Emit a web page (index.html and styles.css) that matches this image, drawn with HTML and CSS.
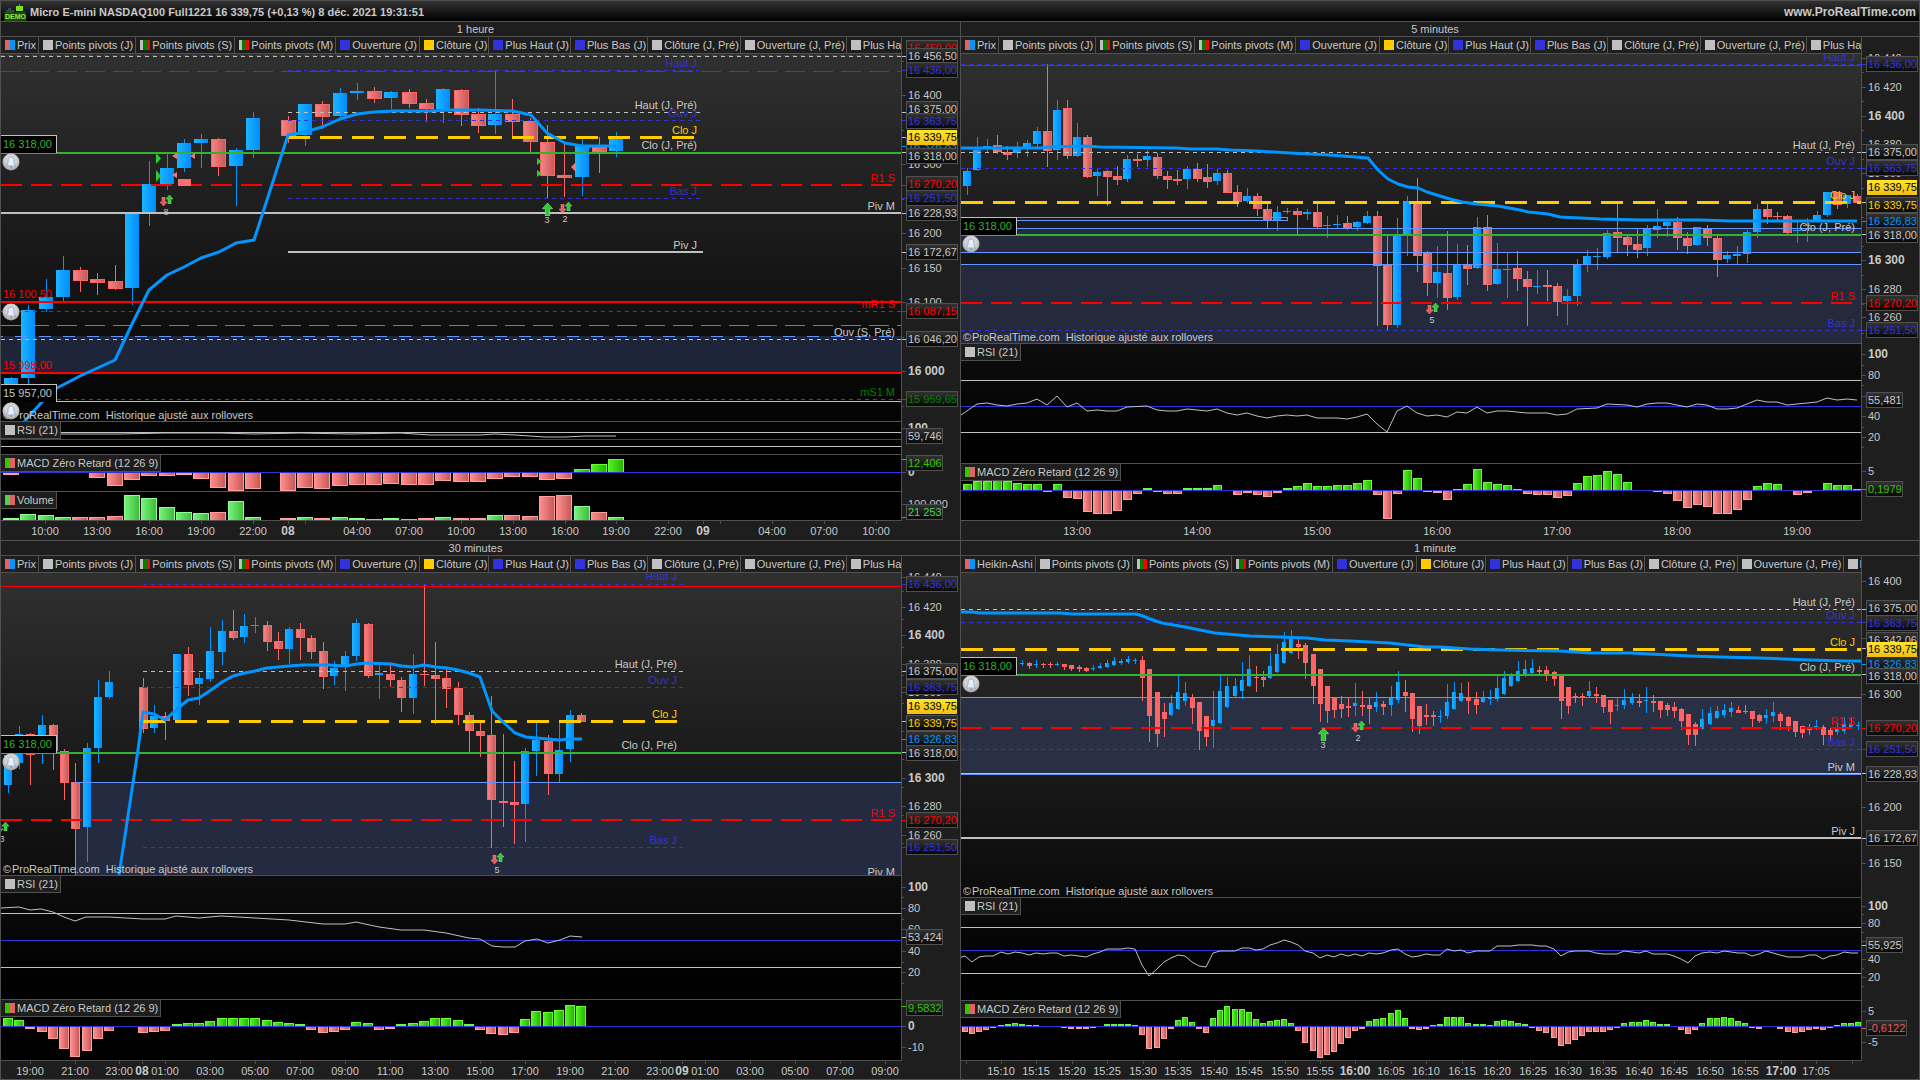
FILE: index.html
```html
<!DOCTYPE html>
<html lang="fr">
<head>
<meta charset="utf-8">
<title>Micro E-mini NASDAQ100 Full1221</title>
<link rel="stylesheet" href="styles.css">
</head>
<body>
<header class="topbar">
  <svg class="topbar__logo" width="24" height="18" viewBox="0 0 24 18" aria-hidden="true">
    <path d="M6 5v4M5 6h3M3 8h8" stroke="#3a4654" stroke-width="2"/>
    <path d="M16.500 1v2" stroke="#5c9c28" stroke-width="1"/>
    <rect x="13" y="3" width="7" height="5" fill="#7be026"/>
    <rect x="1" y="9" width="22" height="9" fill="#22401a"/>
    <text class="topbar__demo" x="2" y="16">DEMO</text>
  </svg>
  <h1 class="topbar__title">Micro E-mini NASDAQ100 Full1221 16 339,75 (+0,13 %) 8 déc. 2021 19:31:51</h1>
  <a class="topbar__link" href="#">www.ProRealTime.com</a>
</header>
<main class="charts">
  <section class="chart" data-chart="h1"><h2 class="chart__title">1 heure</h2></section>
  <section class="chart" data-chart="m5"><h2 class="chart__title">5 minutes</h2></section>
  <section class="chart" data-chart="m30"><h2 class="chart__title">30 minutes</h2></section>
  <section class="chart" data-chart="m1"><h2 class="chart__title">1 minute</h2></section>
</main>
<svg class="defs" width="0" height="0" aria-hidden="true">
  <defs>
    <linearGradient id="gUp"><stop offset="0" stop-color="#1eb4ff"/><stop offset="1" stop-color="#008cff"/></linearGradient>
    <linearGradient id="gDown"><stop offset="0" stop-color="#fa8282"/><stop offset="1" stop-color="#c85a5a"/></linearGradient>
    <linearGradient id="gPos"><stop offset="0" stop-color="#50f028"/><stop offset="1" stop-color="#28b400"/></linearGradient>
    <linearGradient id="gNeg"><stop offset="0" stop-color="#ff8c8c"/><stop offset="1" stop-color="#c85a5a"/></linearGradient>
    <linearGradient id="gVol"><stop offset="0" stop-color="#78f078"/><stop offset="1" stop-color="#3cbe3c"/></linearGradient>
    <linearGradient id="gTag" x2="0" y2="1"><stop offset="0" stop-color="#323232"/><stop offset="1" stop-color="#080808"/></linearGradient>
    <linearGradient id="gLast" x2="0" y2="1"><stop offset="0" stop-color="#ffe628"/><stop offset="1" stop-color="#f0be14"/></linearGradient>
    <radialGradient id="gBell" cx=".5" cy=".4" r=".6"><stop offset="0" stop-color="#f0f0f0"/><stop offset=".7" stop-color="#c8c8c8"/><stop offset="1" stop-color="#969696"/></radialGradient>
    <symbol id="bell" viewBox="0 0 18 18">
      <circle cx="9" cy="9" r="8.500" fill="url(#gBell)"/>
      <path d="M9 4c-2.500 0-3 1.500-3 4 0 2.500-.5 3.500-2 5h10c-1.500-1.500-2-2.500-2-5 0-2.500-.5-4-3-4z" fill="#e6eefa" stroke="#9aacc8" stroke-width="1"/>
      <path d="M8 13.500h2v1.500h-2z" fill="#8a9ab4"/>
    </symbol>
    <symbol id="up" viewBox="0 0 7 9"><path d="M3.500 0L7 4H5v5H2V4H0z" fill="#32c832" stroke="#78f078" stroke-width=".5"/></symbol>
    <symbol id="down" viewBox="0 0 7 9"><path d="M3.500 9L0 5h2V0h3v5h2z" fill="#e65a5a" stroke="#ff8c8c" stroke-width=".5"/></symbol>
  </defs>
</svg>
<script src="charts.js"></script>
</body>
</html>
```
FILE: styles.css
```css
* { box-sizing: border-box; }

body {
  margin: 0;
  min-height: 100vh;
  display: flex;
  flex-direction: column;
  background: #1e1e1e;
  color: #c8c8c8;
  font: 11px/14px "Liberation Sans", Arial, sans-serif;
}

svg { display: block; }
.defs { position: absolute; }

.topbar {
  display: flex;
  align-items: center;
  gap: 3px;
  height: 22px;
  padding: 2px 3px 0 2px;
  border: 1px solid #505050;
  background: linear-gradient(#323232, #000);
}
.topbar__demo { font: bold 7px "Liberation Sans", Arial, sans-serif; fill: #8cf03c; }
.topbar__title { margin: 0; flex: 1; font-size: 11px; line-height: 16px; white-space: nowrap; }
.topbar__link { color: inherit; font-size: 12px; line-height: 16px; font-weight: bold; text-decoration: none; }

.charts { display: grid; grid-template-columns: 1fr 1fr; grid-template-rows: auto auto; }

.chart {
  display: grid;
  grid-template-columns: minmax(0, 1fr) 58px;
  grid-template-rows: 15px auto;
  min-width: 0;
  border-left: 1px solid #505050;
  border-bottom: 1px solid #505050;
}
.chart:nth-child(even) { grid-template-columns: minmax(0, 1fr) 57px; border-right: 1px solid #505050; }

.chart__title {
  grid-column: 1 / -1;
  margin: 0;
  padding-right: 10px;
  border-bottom: 1px solid #505050;
  font-size: 11px;
  font-weight: normal;
  line-height: 14px;
  text-align: center;
}
.chart__plots { border-right: 1px solid #505050; background: linear-gradient(#303030, #000 85%); }
.chart__main { min-width: 0; }

.legend {
  display: flex;
  margin: 0;
  padding: 0;
  height: 17px;
  overflow: hidden;
  list-style: none;
  background: #1e1e1e;
  border-bottom: 1px solid #505050;
  border-right: 1px solid #505050;
}
.legend__item {
  display: flex;
  flex: none;
  align-items: center;
  gap: 2px;
  padding: 0 2px 0 4px;
  border-right: 1px solid #505050;
  line-height: 16px;
  white-space: nowrap;
}
.legend__item:nth-child(n+6) { padding-right: 1px; }

.swatch { width: 10px; height: 10px; flex: none; background: #c0c0c0; }
.swatch--price { background: linear-gradient(90deg, #e06464 50%, #0096ff 50%); }
.swatch--pivot { background: linear-gradient(90deg, #c0c0c0 30%, #008000 30% 70%, #f00 70%); }
.swatch--blue { background: #3232dc; }
.swatch--yellow { background: #fc0; }
.swatch--macd { background: linear-gradient(90deg, #32c800 50%, #e06464 50%); }
.swatch--volume { background: linear-gradient(90deg, #50d250 50%, #e06464 50%); }

.pane { display: grid; border-bottom: 1px solid #505050; }
.pane__svg { grid-area: 1 / 1; width: 100%; }
.pane__label {
  grid-area: 1 / 1;
  place-self: start;
  z-index: 1;
  display: flex;
  align-items: center;
  gap: 2px;
  height: 17px;
  padding: 0 2px 0 4px;
  background: #1e1e1e;
  border-right: 1px solid #505050;
  border-bottom: 1px solid #505050;
}
.timeline, .scale { width: 100%; }

text { font-size: 11px; fill: #c8c8c8; white-space: pre; }
.t-bold { font-size: 12px; font-weight: bold; }
.t-small { font-size: 9px; }
.crisp { shape-rendering: crispEdges; }
```
FILE: charts.js
```js
const WHITE = '#c0c0c0', BLUE = '#3232dc', YELLOW = '#ffcc00', RED = '#ff0000',
      GREEN = '#32b432', DGREEN = '#008000', SKY = '#0096ff', ZONE = '#6496ff', FRAME = '#505050';
const SHORT = '4 4', LONG = '20 8', THICK = '21 9', CLOSE = '22 10';
const FAR = 4000;

const rect = (x, y, w, h, fill, extra = '') =>
  `<rect x="${x}" y="${y}" width="${w}" height="${h}" fill="${fill}" ${extra}/>`;
const text = (x, y, s, { fill = '', anchor = 'start', cls = '' } = {}) =>
  `<text x="${x}" y="${y}" text-anchor="${anchor}" class="${cls}" ${fill ? `style="fill:${fill}"` : ''}>${s}</text>`;
const path = (pts, color, w) =>
  `<polyline points="${pts.join(' ')}" fill="none" stroke="${color}" stroke-width="${w}" stroke-linejoin="round"/>`;

// Horizontal level: top row, start, end, colour, thickness, dash, dash offset
const level = ([y, x1, x2, color, w = 1, dash = '', off = 0]) =>
  `<line class="crisp" x1="${x1}" x2="${x2}" y1="${y + w / 2}" y2="${y + w / 2}" stroke="${color}" stroke-width="${w}" stroke-dasharray="${dash}" stroke-dashoffset="${off}"/>`;

// Candles: "u high top bottom low" (u = up, d = down, - = no bar)
function candles(list, xAt, width) {
  return list.split(',').map((item, k) => {
    const [kind, h, t, b, l] = item.trim().split(' ').map((v, i) => (i ? +v : v));
    if (kind === '-') return '';
    const x = xAt(k), half = Math.floor(width / 2);
    const wick = rect(x, h, 1, Math.max(l - h, 1), kind === 'u' ? SKY : '#ff6464');
    if (kind === 'u') return wick + rect(x - half, t, width, Math.max(b - t, 1), 'url(#gUp)');
    const tall = b - t > 2 && width > 5;
    return wick + rect(x - half, t, width + 1, Math.max(b - t, 1), '#ff6464') +
      (tall ? rect(x - half + 1, t + 1, width - 1, b - t - 2, 'url(#gDown)') : '');
  }).join('');
}

// Histogram: signed bar heights around a zero row
function bars(values, xAt, width, zero) {
  return values.map((v, k) => {
    if (!v) return '';
    const x = xAt(k) - Math.floor(width / 2), h = Math.abs(v), y = v > 0 ? zero - h : zero + 1;
    const edge = v > 0 ? '#64ff32' : '#ffa0a0';
    return rect(x, y, width, h, edge) +
      (h > 2 ? rect(x + 1, v > 0 ? y + 1 : y, width - 2, h - 1, v > 0 ? 'url(#gPos)' : 'url(#gNeg)') : '');
  }).join('');
}
const volume = (list, xAt, width, base) => list.split(' ').map((item, k) => {
  if (item === '-') return '';
  const up = item[0] === 'u', h = +item.slice(1), x = xAt(k) - width / 2;
  return rect(x, base - h, width, h, up ? '#8cff8c' : '#ffa0a0') +
    (h > 2 ? rect(x + 1, base - h + 1, width - 2, h - 1, up ? 'url(#gVol)' : 'url(#gNeg)') : '');
}).join('');

const alertTag = (x, y, label, color) =>
  rect(x, y, 56, 18, WHITE) + rect(x, y + 1, 55, 17, '#000') + text(x + 2, y + 13, label, { fill: color });
const bell = (x, y) => `<use href="#bell" x="${x - 9}" y="${y - 9}" width="18" height="18"/>`;
const pair = (x, y, n) =>
  `<use href="#down" x="${x - 6}" y="${y + 2}" width="7" height="9"/><use href="#up" x="${x}" y="${y}" width="7" height="9"/>` +
  text(x, y + 20, n, { anchor: 'middle', cls: 't-small' });
const single = (x, y, n) =>
  `<use href="#up" x="${x - 5}" y="${y}" width="11" height="13"/>` + text(x, y + 20, n, { anchor: 'middle', cls: 't-small' });
const triR = (x, y, h = 7) => `<path d="M${x} ${y}l5 ${h / 2}l-5 ${h / 2}z" fill="#32c832"/>`;
const triL = (x, y, h = 6) => `<path d="M${x} ${y}l-5 ${h / 2}l5 ${h / 2}z" fill="#f07878"/>`;
const note = (x, y) => text(x, y, '©') + text(x + 9, y, 'ProRealTime.com  Historique ajusté aux rollovers');
const names = (x, list) => list.map(([y, s, fill]) => text(x, y, s, { fill, anchor: 'end' })).join('');

// Price scale entries: [y, text, colour, kind]
const scaleItem = x => ([y, s, color = '', kind = 'tag']) => {
  if (kind === 'plain') return rect(x - 4, y, 4, 1, FRAME) + text(x + 2, y + 4, s);
  if (kind === 'bold') return rect(x - 4, y, 4, 1, FRAME) + text(x + 2, y + 4, s, { cls: 't-bold' });
  if (kind === 'last') return rect(x + 1, y - 7, 50, 15, 'url(#gLast)') + text(x + 2, y + 4, s, { fill: '#000' });
  const w = s.length > 8 ? 52 : s.length > 6 ? 41 : 37;
  return rect(x, y - 8, w, 16, FRAME) + rect(x + 1, y - 7, w - 2, 14, 'url(#gTag)') +
    text(x + 2, y + 4, s, { fill: color });
};
const ticks = (x, list) => list.map(([y, color, w = 4]) => rect(x - 4, y, w, 1, color)).join('');
const minor = (x, from, to, step) => {
  let out = '';
  for (let y = from; y < to; y += step) out += rect(x - 4, Math.round(y), 2, 1, FRAME);
  return out;
};
const times = (y, list) => list.map(([x, s, bold]) =>
  rect(x, y, 1, 3, FRAME) + text(x, y + 14, s, { anchor: 'middle', cls: bold ? 't-bold' : '' })).join('');

const LEGEND = [['pivot0', 'Points pivots (J)'], ['pivot', 'Points pivots (S)'], ['pivot', 'Points pivots (M)'],
  ['blue', 'Ouverture (J)'], ['yellow', 'Clôture (J)'], ['blue', 'Plus Haut (J)'], ['blue', 'Plus Bas (J)'],
  ['gray', 'Clôture (J, Pré)'], ['gray', 'Ouverture (J, Pré)'], ['gray', 'Plus Haut (J, Pré)']];

const x1 = k => Math.round(11 + 17.29 * k);
const x2 = k => 967 + 10 * k;
const x3 = k => Math.round(8 + 11.24 * k);
const x4 = k => Math.floor(965.6 + 7.09 * k);

const CHARTS = {
  h1: {
    x: 1, top: 54, first: 'Prix',
    panes: [
      { h: 367, draw:
        rect(1, 336, FAR, 37, '#1e2538') +
        candles('u 377 378 384 404,u 305 310 378 384,u 279 297 309 312,u 256 270 297 301,d 267 270 281 292,d 273 279 283 295,d 265 281 289 290,u 213 213 288 305,u 161 184 212 226,u 154 168 184 190,u 139 143 168 172,u 134 139 143 168,d 138 139 167 176,u 148 150 166 206,u 112 118 150 158,-,d 116 120 136 143,u 104 104 135 146,d 101 104 117 129,u 88 93 116 119,u 83 91 93 100,d 87 91 99 103,u 91 92 98 109,d 89 92 104 108,d 99 103 109 122,u 88 89 109 123,d 89 90 115 126,d 108 114 126 133,u 70 114 125 134,d 99 114 122 136,d 118 121 142 152,d 125 142 176 198,d 142 175 178 197,u 139 146 177 196,d 137 147 152 173,u 132 139 151 157', x1, 14) +
        [[55, 1, FAR, RED, 1, SHORT, 1], [56, 1, FAR, WHITE, 1, SHORT], [71, 1, FAR, RED, 1, LONG], [70, 288, 700, BLUE, 1, SHORT],
         [112, 288, 700, WHITE, 1, SHORT], [120, 288, 700, BLUE, 1, SHORT], [136, 288, 694, YELLOW, 3, CLOSE],
         [184, 1, FAR, RED, 2, THICK], [198, 288, 700, BLUE, 1, SHORT], [212, 1, FAR, WHITE, 2], [251, 288, 703, WHITE, 2],
         [301, 1, FAR, RED, 2], [311, 1, FAR, RED, 1, SHORT], [325, 1, FAR, GREEN, 1, LONG], [336, 1, FAR, ZONE, 1, '12 12', 10],
         [339, 1, FAR, WHITE, 1, SHORT], [372, 1, FAR, RED, 2], [399, 1, FAR, DGREEN, 1, SHORT], [401, 1, FAR, WHITE],
         [152, 1, FAR, GREEN, 2]].map(level).join('') +
        path([[24,422],[41,403],[57,388],[80,376],[115,360],[133,322],[149,290],[167,275],[184,267],[201,258],[219,252],[236,243],[254,240],[288,135],[305,132],[322,127],[340,119],[357,114],[374,112],[393,111],[430,111],[450,110],[480,110],[513,111],[531,115],[547,133],[565,143],[582,146],[616,146]], SKY, 3) +
        names(697, [[67, 'Haut J', BLUE], [109, 'Haut (J, Pré)'], [117, 'Ouv J', BLUE], [134, 'Clo J', YELLOW], [149, 'Clo (J, Pré)'], [195, 'Bas J', BLUE], [249, 'Piv J']]) +
        names(895, [[182, 'R1 S', RED], [210, 'Piv M'], [308, 'mR1 S', RED], [336, 'Ouv (S, Pré)'], [396, 'mS1 M', DGREEN]]) +
        text(3, 298, '16 100,50', { fill: RED }) + text(3, 369, '15 998,00', { fill: RED }) +
        note(3, 419) + alertTag(1, 135, '16 318,00', GREEN) + alertTag(1, 384, '15 957,00', '') +
        bell(11, 162) + bell(11, 312) + bell(11, 411) +
        triR(156, 153, 11) + triR(156, 170, 12) + triL(177, 153) + triL(195, 153) + triL(177, 172) +
        rect(178, 179, 13, 7, '#fa6e6e') + pair(166, 195, '8') +
        triR(537, 158) + triR(537, 170) + triL(576, 162, 10) + single(547, 203, '3') + pair(565, 202, '2') },
      { h: 32, label: ['gray', 'RSI (21)'], draw:
        [[432, 1, FAR, WHITE], [446, 1, FAR, WHITE], [439, 1, FAR, BLUE]].map(level).join('') +
        path([[1,434],[120,434],[165,433],[220,433],[254,434],[300,433],[350,434],[400,433],[430,435],[480,435],[495,434],[515,435],[545,437],[565,437],[585,436],[616,436]], WHITE, 1) },
      { h: 36, label: ['macd', 'MACD Zéro Retard (12 26 9)'], draw:
        bars([-2,0,0,0,0,-5,-13,-7,-3,-3,-2,-6,-15,-18,-16,0,-18,-15,-16,-13,-12,-12,-11,-12,-12,-8,-9,-9,-6,-4,-4,-7,-6,3,8,13], x1, 16, 472) + level([472, 1, FAR, BLUE]) },
      { h: 28, label: ['volume', 'Volume'], draw:
        volume('u2 u6 u5 u3 d3 d3 d4 u25 u22 u13 u8 u7 d8 u19 u3 - d2 u3 d2 u3 u2 d1 u2 d1 d2 u3 d2 d2 u5 d5 d4 d24 d25 u14 d8 u3', x1, 16, 520) },
    ],
    scale: minor(906, 61, 420, 69) +
      ticks(906, [[112, WHITE], [120, BLUE], [137, WHITE], [146, SKY], [152, WHITE], [185, RED], [198, BLUE], [213, WHITE], [252, WHITE], [311, RED], [339, WHITE], [399, DGREEN], [459, '#32c800'], [517, GREEN], [70, BLUE], [56, WHITE]]) +
      [[95, '16 400', '', 'plain'], [164, '16 300', '', 'plain'], [233, '16 200', '', 'plain'], [268, '16 150', '', 'plain'], [302, '16 100', '', 'plain'],
       [371, '16 000', '', 'bold'], [428, '100', '', 'bold'], [472, '0', '', 'bold'], [504, '100 000', '', 'plain'],
       [48, '16 459,00', RED], [56, '16 456,50'], [70, '16 436,00', BLUE], [109, '16 375,00'], [121, '16 363,75', BLUE], [146, '16 326,83', SKY],
       [137, '16 339,75', '', 'last'], [156, '16 318,00'], [184, '16 270,20', RED], [198, '16 251,50', BLUE], [213, '16 228,93'], [252, '16 172,67'],
       [311, '16 087,15', RED], [339, '16 046,20'], [399, '15 959,65', DGREEN], [436, '59,746'], [463, '12,406', '#32c800'], [512, '21 253', '#50d250']].map(scaleItem(906)).join(''),
    timeHeight: 19,
    times: [[45,'10:00'],[97,'13:00'],[149,'16:00'],[201,'19:00'],[253,'22:00'],[288,'08',1],[305,''],[357,'04:00'],[409,'07:00'],[461,'10:00'],[513,'13:00'],[565,'16:00'],[616,'19:00'],[668,'22:00'],[703,'09',1],[720,''],[772,'04:00'],[824,'07:00'],[876,'10:00']],
  },

  m5: {
    x: 961, top: 54, first: 'Prix',
    panes: [
      { h: 289, draw:
        rect(961, 228, FAR, 24, '#252b3d') + rect(961, 264, FAR, 80, '#242a3c') +
        candles('u 168 171 186 195,u 137 150 170 171,u 139 146 148 153,d 135 145 152 154,d 146 152 155 160,u 142 149 153 158,u 140 143 148 157,u 127 131 144 147,d 64 131 151 167,u 100 110 150 160,d 100 108 156 159,u 123 137 156 157,d 135 137 177 178,u 169 172 176 196,d 170 171 177 206,d 166 176 180 185,u 155 159 179 182,d 154 159 161 167,u 150 156 160 167,d 153 157 176 179,d 171 176 180 189,d 170 179 181 185,u 166 169 179 189,d 163 169 179 182,d 164 177 182 188,u 169 173 181 185,d 170 173 193 193,d 185 192 202 207,u 188 196 201 203,d 193 196 209 216,d 204 209 220 228,u 206 212 220 231,u 208 211 212 214,d 208 211 215 234,u 209 212 214 220,d 204 212 227 228,u 216 225 226 238,u 215 224 225 228,d 216 223 228 230,u 221 222 227 231,u 211 216 223 224,d 211 216 266 326,d 235 265 325 330,u 218 235 325 328,u 196 201 235 256,d 178 202 256 272,d 251 253 283 296,u 246 272 283 298,d 231 273 298 310,u 244 265 297 300,d 245 265 269 285,u 217 227 268 269,d 215 227 285 291,u 243 269 284 285,u 253 269 270 298,d 251 268 279 291,d 271 279 287 326,u 270 286 287 294,d 270 285 287 301,d 283 286 302 316,u 289 296 301 325,u 259 264 296 306,u 250 256 264 272,u 248 256 257 270,u 230 233 257 259,d 204 232 238 252,d 235 237 245 256,d 229 244 250 258,u 225 228 248 256,u 209 226 230 238,u 220 222 226 237,d 217 222 238 250,d 232 238 246 254,u 227 227 245 246,d 225 229 238 246,d 236 238 260 277,u 251 255 259 263,u 246 254 256 265,u 230 232 254 263,u 204 209 232 238,d 204 209 217 224,d 212 216 217 221,d 215 216 233 235,u 222 230 231 243,u 218 225 226 242,u 211 215 221 221,u 192 192 215 217,d 192 192 205 209,u 195 195 204 208,d 194 196 203 203', x2, 8) +
        [[217, 961, 1288, ZONE], [220, 961, 1288, ZONE], [228, 961, FAR, ZONE], [252, 961, FAR, ZONE], [264, 961, FAR, ZONE],
         [64, 961, FAR, BLUE, 1, SHORT], [65, 961, FAR, RED], [152, 961, FAR, WHITE, 1, SHORT], [168, 961, FAR, BLUE, 1, SHORT],
         [201, 961, FAR, YELLOW, 3, CLOSE], [302, 961, FAR, RED, 2, THICK], [330, 961, FAR, BLUE, 1, SHORT], [234, 961, FAR, GREEN, 2]].map(level).join('') +
        rect(1287, 217, 1, 4, ZONE) +
        path([[961,148],[1040,148],[1047,147],[1085,146],[1100,147],[1177,148],[1190,149],[1217,149],[1230,150],[1257,151],[1290,153],[1330,155],[1368,158],[1378,170],[1388,179],[1398,184],[1408,187],[1418,188],[1427,192],[1440,196],[1450,199],[1462,202],[1477,204],[1498,206],[1520,210],[1528,212],[1548,214],[1560,217],[1580,218],[1600,219],[1640,220],[1700,220],[1730,221],[1857,221]], SKY, 3) +
        names(1855, [[61, 'Haut J', BLUE], [149, 'Haut (J, Pré)'], [165, 'Ouv J', BLUE], [199, 'Clo J', YELLOW], [231, 'Clo (J, Pré)'], [300, 'R1 S', RED], [327, 'Bas J', BLUE]]) +
        note(963, 341) + alertTag(961, 217, '16 318,00', GREEN) + bell(971, 244) + pair(1432, 303, '5') },
      { h: 119, label: ['gray', 'RSI (21)'], draw:
        [[380, 961, FAR, WHITE], [432, 961, FAR, WHITE], [406, 961, FAR, BLUE]].map(level).join('') +
        path([[961,415],[977,404],[987,403],[997,405],[1007,406],[1017,404],[1027,403],[1037,399],[1047,405],[1057,396],[1067,407],[1077,403],[1087,411],[1097,410],[1107,411],[1117,411],[1127,407],[1147,406],[1157,410],[1167,411],[1177,411],[1187,409],[1207,411],[1217,409],[1227,413],[1237,415],[1247,413],[1257,416],[1267,418],[1277,416],[1287,415],[1297,416],[1307,415],[1317,418],[1337,418],[1347,419],[1357,417],[1367,414],[1377,424],[1387,432],[1397,411],[1407,406],[1417,413],[1427,416],[1437,415],[1447,417],[1457,412],[1467,413],[1477,407],[1487,413],[1497,411],[1507,411],[1527,413],[1547,413],[1557,415],[1567,414],[1577,409],[1597,408],[1607,404],[1627,405],[1637,407],[1647,404],[1657,403],[1667,403],[1687,407],[1697,404],[1707,405],[1717,409],[1727,409],[1737,408],[1747,404],[1757,400],[1767,402],[1777,402],[1787,405],[1797,404],[1817,402],[1827,398],[1837,400],[1847,399],[1857,400]], WHITE, 1) },
      { h: 56, label: ['macd', 'MACD Zéro Retard (12 26 9)'], draw:
        bars([6,9,9,10,9,7,6,6,-1,6,-7,-8,-21,-23,-23,-20,-9,-3,2,-1,-3,-3,2,2,2,5,0,-4,-2,-4,-6,-2,2,4,7,4,4,5,5,7,10,-4,-28,-3,20,12,-1,-2,-9,1,6,21,8,6,5,1,-3,-4,-4,-7,-5,7,14,15,19,16,8,0,0,-1,-3,-10,-17,-14,-16,-23,-23,-19,-9,4,7,6,0,-4,-2,0,7,5,5,1], x2, 9, 490) + level([490, 961, FAR, BLUE]) },
    ],
    scale: minor(1866, 72, 335, 29) +
      ticks(1866, [[64, BLUE], [152, WHITE], [168, BLUE], [202, WHITE], [221, SKY], [234, WHITE], [303, RED], [330, BLUE], [489, '#32c800'], [385, FRAME, 2], [427, FRAME, 2], [447, FRAME, 2], [365, FRAME, 2]]) +
      [[58, '16 440', '', 'plain'], [87, '16 420', '', 'plain'], [116, '16 400', '', 'bold'], [144, '16 380', '', 'plain'], [173, '16 360', '', 'plain'],
       [260, '16 300', '', 'bold'], [289, '16 280', '', 'plain'], [317, '16 260', '', 'plain'],
       [64, '16 436,00', BLUE], [152, '16 375,00'], [168, '16 363,75', BLUE], [187, '16 339,75', '', 'last'], [205, '16 339,75', YELLOW],
       [221, '16 326,83', SKY], [235, '16 318,00'], [303, '16 270,20', RED], [330, '16 251,50', BLUE],
       [354, '100', '', 'bold'], [375, '80', '', 'plain'], [396, '60', '', 'plain'], [416, '40', '', 'plain'], [437, '20', '', 'plain'], [400, '55,481'],
       [471, '5', '', 'plain'], [489, '0,1979', '#32c800']].map(scaleItem(1866)).join(''),
    timeHeight: 19,
    times: [[1077,'13:00'],[1197,'14:00'],[1317,'15:00'],[1437,'16:00'],[1557,'17:00'],[1677,'18:00'],[1797,'19:00']],
  },

  m30: {
    x: 1, top: 573, first: 'Prix',
    panes: [
      { h: 302, draw:
        rect(75, 782, FAR, 94, '#242b40') +
        candles('u 753 755 785 793,u 726 734 763 769,d 733 734 755 785,u 715 725 750 764,d 724 725 751 770,d 749 751 783 800,d 763 782 829 829,u 743 748 827 862,u 680 697 748 763,u 671 682 697 699,-,-,d 678 687 729 733,u 705 716 728 733,d 712 716 721 740,u 654 654 720 720,d 647 654 685 696,u 673 678 684 705,u 627 651 679 682,u 620 631 652 665,d 610 631 638 640,u 614 626 637 643,u 617 625 626 633,d 621 625 642 651,d 632 641 649 660,u 627 629 649 664,d 623 629 638 660,d 635 638 652 659,d 642 651 677 689,u 661 668 676 685,u 651 656 665 691,u 619 623 656 661,d 623 624 676 678,u 664 673 675 699,d 665 674 680 687,d 677 680 698 712,u 654 674 698 714,d 585 674 675 686,d 642 675 679 724,d 669 678 689 708,d 682 688 715 725,d 712 715 731 752,d 722 731 736 757,d 696 735 800 848,d 734 801 803 827,d 761 802 805 844,u 748 751 804 842,u 722 740 751 776,d 735 741 774 795,u 722 750 774 782,u 710 715 749 762,d 713 715 722 722', x3, 8) +
        rect(75, 782, 1, 94, ZONE) +
        [[782, 75, FAR, ZONE], [584, 143, 683, BLUE, 1, SHORT], [586, 1, FAR, RED], [671, 143, 683, WHITE, 1, SHORT], [687, 143, 683, BLUE, 1, SHORT],
         [720, 143, 677, YELLOW, 3, CLOSE], [819, 1, FAR, RED, 2, THICK], [847, 143, 683, BLUE, 1, SHORT], [752, 1, FAR, GREEN, 2]].map(level).join('') +
        path([[119,875],[138,750],[143,712],[154,714],[165,720],[177,709],[188,700],[199,698],[211,690],[222,682],[233,676],[245,673],[255,671],[267,668],[289,666],[302,665],[328,665],[345,666],[357,664],[368,663],[391,664],[402,666],[413,667],[424,665],[436,667],[447,668],[458,670],[469,673],[480,677],[492,711],[503,722],[515,733],[526,737],[537,738],[548,739],[559,740],[570,739],[582,739]], SKY, 3) +
        names(677, [[580, 'Haut J', BLUE], [668, 'Haut (J, Pré)'], [684, 'Ouv J', BLUE], [718, 'Clo J', YELLOW], [749, 'Clo (J, Pré)'], [844, 'Bas J', BLUE]]) +
        names(895, [[817, 'R1 S', RED], [876, 'Piv M']]) +
        note(3, 873) + alertTag(1, 735, '16 318,00', GREEN) + bell(11, 762) + pair(2, 822, '3') + pair(497, 853, '5') },
      { h: 123, label: ['gray', 'RSI (21)'], draw:
        [[913, 1, FAR, WHITE], [967, 1, FAR, WHITE], [940, 1, FAR, BLUE]].map(level).join('') +
        path([[1,908],[19,907],[30,910],[41,909],[53,912],[64,917],[75,921],[86,917],[109,917],[143,919],[165,919],[176,916],[199,918],[221,916],[255,918],[289,920],[323,924],[345,924],[356,922],[379,927],[401,930],[424,930],[446,933],[469,938],[480,939],[492,946],[503,947],[515,947],[525,941],[537,939],[548,943],[560,940],[570,936],[582,937]], WHITE, 1) },
      { h: 60, label: ['macd', 'MACD Zéro Retard (12 26 9)'], draw:
        bars([8,6,-2,-5,-12,-22,-30,-24,-12,-4,0,0,-6,-5,-4,2,3,3,5,8,8,8,8,6,4,3,2,-3,-6,-5,-3,4,3,-3,-2,2,3,5,8,8,6,2,-3,-7,-8,-6,7,15,14,16,21,20], x3, 10, 1026) + level([1026, 1, FAR, BLUE]) },
    ],
    scale: minor(906, 591, 860, 28) +
      ticks(906, [[584, BLUE], [671, WHITE], [687, BLUE], [721, WHITE], [739, SKY], [752, WHITE], [820, RED], [847, BLUE], [937, WHITE], [1006, '#32c800'], [897, FRAME, 2], [919, FRAME, 2], [962, FRAME, 2], [983, FRAME, 2]]) +
      [[577, '16 440', '', 'plain'], [607, '16 420', '', 'plain'], [635, '16 400', '', 'bold'], [664, '16 380', '', 'plain'], [692, '16 360', '', 'plain'],
       [778, '16 300', '', 'bold'], [806, '16 280', '', 'plain'], [835, '16 260', '', 'plain'],
       [584, '16 436,00', BLUE], [671, '16 375,00'], [687, '16 363,75', BLUE], [706, '16 339,75', '', 'last'], [723, '16 339,75', YELLOW],
       [739, '16 326,83', SKY], [753, '16 318,00'], [820, '16 270,20', RED], [847, '16 251,50', BLUE],
       [887, '100', '', 'bold'], [908, '80', '', 'plain'], [929, '60', '', 'plain'], [951, '40', '', 'plain'], [972, '20', '', 'plain'], [937, '53,424'],
       [1008, '9,5832', '#32c800'], [1026, '0', '', 'bold'], [1047, '-10', '', 'plain']].map(scaleItem(906)).join(''),
    timeHeight: 18,
    times: [[30,'19:00'],[75,'21:00'],[119,'23:00'],[142,'08',1],[165,'01:00'],[210,'03:00'],[255,'05:00'],[300,'07:00'],[345,'09:00'],[390,'11:00'],[435,'13:00'],[480,'15:00'],[525,'17:00'],[570,'19:00'],[615,'21:00'],[660,'23:00'],[682,'09',1],[705,'01:00'],[750,'03:00'],[795,'05:00'],[840,'07:00'],[885,'09:00']],
  },

  m1: {
    x: 961, top: 573, first: 'Heikin-Ashi',
    panes: [
      { h: 324, draw:
        rect(961, 697, FAR, 77, '#2a3043') +
        candles('-,-,-,-,-,-,-,-,u 660 663 664 666,d 662 663 666 669,u 660 664 665 668,d 663 664 665 668,d 662 664 665 668,u 662 664 665 666,d 664 664 667 670,d 665 665 669 671,d 665 667 669 672,d 667 668 671 672,u 665 668 669 671,u 663 666 668 669,u 660 663 667 668,u 657 661 665 666,u 659 661 663 665,u 656 659 662 664,u 658 660 661 664,d 656 660 678 701,d 669 669 716 742,d 692 692 734 747,d 703 712 719 737,u 695 703 715 716,u 676 692 709 710,u 682 693 701 706,d 694 697 708 724,d 702 702 731 750,d 716 716 737 746,u 691 720 726 748,u 676 691 723 724,u 677 686 707 708,u 678 686 696 698,u 662 680 691 699,u 655 669 686 687,d 666 677 678 692,d 671 677 680 687,u 653 666 678 679,u 644 654 672 673,u 632 642 663 664,u 630 637 653 654,d 638 644 647 659,d 643 645 663 679,d 654 654 686 704,d 669 669 704 722,d 686 686 711 723,d 697 698 710 718,d 696 704 709 718,d 698 706 708 717,u 683 703 706 716,d 691 705 707 716,d 698 705 709 724,u 692 702 707 712,d 701 704 707 715,u 686 698 705 716,u 671 682 700 703,d 680 692 696 712,d 693 693 719 732,d 706 706 726 734,d 704 715 717 725,d 711 715 717 726,u 710 716 717 723,u 684 702 716 719,u 682 692 709 710,u 683 693 701 702,d 682 697 701 714,d 692 699 705 714,u 691 698 702 703,u 690 698 699 705,u 675 688 699 702,u 671 678 694 695,u 673 676 686 687,u 661 671 681 682,u 660 669 674 677,u 659 668 673 674,d 666 670 672 674,d 666 670 674 681,d 671 672 679 686,d 675 675 701 719,d 687 687 706 714,d 693 696 697 703,d 693 696 697 706,u 681 691 696 698,d 687 694 696 703,d 695 695 707 713,d 700 700 712 724,u 698 705 706 711,u 689 700 705 709,u 693 697 703 705,d 694 701 703 707,u 687 700 701 713,d 695 701 703 712,d 701 701 710 718,d 703 705 710 716,d 702 707 711 718,d 708 709 721 730,d 714 714 735 745,d 722 724 735 746,u 709 719 729 730,u 707 713 724 725,u 706 711 718 719,u 704 710 715 718,u 702 708 712 717,d 706 710 713 713,d 705 711 712 714,d 711 711 719 728,d 714 715 721 723,u 709 715 718 724,u 702 712 716 722,d 712 714 721 730,d 716 717 726 731,d 721 721 732 737,d 726 726 733 738,d 724 727 730 735,u 720 726 728 730,d 725 727 735 745,d 728 730 735 740,u 723 728 732 735,u 717 724 731 734,u 718 724 727 728,u 722 725 726 730', x4, 4) +
        [[697, 961, FAR, ZONE], [609, 961, FAR, WHITE, 1, SHORT], [622, 961, FAR, BLUE, 1, SHORT], [648, 961, FAR, YELLOW, 3, CLOSE],
         [727, 961, FAR, RED, 2, THICK], [749, 961, FAR, BLUE, 1, SHORT], [773, 961, FAR, WHITE], [774, 961, FAR, ZONE],
         [837, 961, FAR, WHITE, 2], [674, 961, FAR, GREEN, 2]].map(level).join('') +
        path([[961,612],[972,612],[980,613],[1060,613],[1072,614],[1136,614],[1143,616],[1150,619],[1162,623],[1185,627],[1200,630],[1215,633],[1250,636],[1280,637],[1307,638],[1325,640],[1350,641],[1390,643],[1425,647],[1440,647],[1470,649],[1500,650],[1560,651],[1590,653],[1630,653],[1690,656],[1720,657],[1760,658],[1810,660],[1845,661],[1861,661]], SKY, 3) +
        names(1855, [[606, 'Haut (J, Pré)'], [619, 'Ouv J', BLUE], [646, 'Clo J', YELLOW], [671, 'Clo (J, Pré)'], [725, 'R1 S', RED], [746, 'Bas J', BLUE], [771, 'Piv M'], [835, 'Piv J']]) +
        note(963, 895) + alertTag(961, 657, '16 318,00', GREEN) + bell(971, 684) + single(1323, 728, '3') + pair(1358, 721, '2') },
      { h: 102, label: ['gray', 'RSI (21)'], draw:
        [[927, 961, FAR, WHITE], [973, 961, FAR, WHITE], [950, 961, FAR, BLUE]].map(level).join('') +
        path([958,956,962,957,956,956,952,954,952,953,955,953,954,953,953,956,955,956,957,954,952,949,949,949,948,949,965,976,969,962,958,955,956,962,966,967,953,951,951,951,948,948,950,949,945,943,940,942,945,951,953,958,955,957,954,956,954,956,953,954,953,950,949,954,957,956,954,955,955,949,951,950,953,951,951,951,946,946,946,945,945,945,946,946,949,956,952,951,951,951,953,954,954,954,951,952,953,951,954,954,954,956,959,963,956,953,952,953,951,952,953,953,956,954,951,953,955,957,957,957,955,955,959,956,955,952,953,953]
          .map((y, k) => [x4(k - 1), y]), WHITE, 1) },
      { h: 59, label: ['macd', 'MACD Zéro Retard (12 26 9)'], draw:
        bars([-5,-7,-5,-3,-1,1,2,3,2,1,1,0,0,0,-1,-2,-2,-2,-1,0,2,2,2,2,1,-8,-22,-21,-12,-2,6,9,4,-2,-6,8,16,20,17,17,14,7,3,5,6,7,3,-4,-16,-24,-31,-28,-25,-17,-11,-4,-2,5,7,8,13,16,8,-2,-3,-2,1,2,9,9,9,3,2,2,1,5,6,5,3,2,-1,-4,-6,-11,-19,-17,-13,-9,-5,-5,-5,-3,-1,3,4,4,6,4,2,2,0,-3,-7,-3,3,8,8,9,8,5,3,-1,-2,0,0,-2,-5,-6,-5,-3,-2,-3,-1,1,3,3,4], x4, 6, 1026) + level([1026, 961, FAR, BLUE]) },
    ],
    scale:
      ticks(1866, [[609, WHITE], [622, BLUE], [638, FRAME], [648, WHITE], [664, SKY], [674, WHITE], [728, RED], [749, BLUE], [773, WHITE], [838, WHITE], [945, WHITE], [1028, '#e65a5a'], [914, FRAME, 2], [932, FRAME, 2], [968, FRAME, 2], [986, FRAME, 2]]) +
      [[581, '16 400', '', 'plain'], [694, '16 300', '', 'plain'], [807, '16 200', '', 'plain'], [863, '16 150', '', 'plain'],
       [608, '16 375,00'], [623, '16 363,75', BLUE], [640, '16 342,06'], [664, '16 326,83', SKY], [649, '16 339,75', '', 'last'], [676, '16 318,00'],
       [728, '16 270,20', RED], [749, '16 251,50', BLUE], [774, '16 228,93'], [838, '16 172,67'],
       [906, '100', '', 'bold'], [923, '80', '', 'plain'], [941, '60', '', 'plain'], [959, '40', '', 'plain'], [977, '20', '', 'plain'], [945, '55,925'],
       [1011, '5', '', 'plain'], [1042, '-5', '', 'plain'], [1028, '-0,6122', '#e65a5a']].map(scaleItem(1866)).join(''),
    timeHeight: 18,
    times: [[966, ''], ...Array.from({ length: 24 }, (_, i) => {
      const m = 10 + 5 * i, h = 15 + Math.floor(m / 60);
      return [Math.round(1001 + 35.44 * i), `${h}:${String(m % 60).padStart(2, '0')}`, m % 60 === 0];
    }), [1852, '']],
  },
};

const svg = (cls, h, x, y, body, extra = '') =>
  `<svg class="${cls}" height="${h}" ${extra}><g transform="translate(${-x} ${-y})">${body}</g></svg>`;
const swatch = kind => `<span class="swatch swatch--${kind}"></span>`;

document.querySelectorAll('.chart').forEach(section => {
  const c = CHARTS[section.dataset.chart];
  let y = c.top, panes = '';
  for (const p of c.panes) {
    const label = p.label ? `<div class="pane__label">${swatch(p.label[0])}${p.label[1]}</div>` : '';
    panes += `<div class="pane">${svg('pane__svg', p.h, c.x, y, p.draw)}${label}</div>`;
    y += p.h + 1;
  }
  const items = [['price', c.first], ...LEGEND]
    .map(([kind, name]) => `<li class="legend__item">${swatch(kind)}${name}</li>`).join('');
  section.insertAdjacentHTML('beforeend', `
    <div class="chart__main">
      <ul class="legend">${items}</ul>
      <div class="chart__plots">${panes}</div>
      ${svg('timeline', c.timeHeight, c.x, y, times(y, c.times))}
    </div>
    ${svg('scale', y - c.top + 17, c.x + 901, c.top - 17, c.scale)}`);
});
```
